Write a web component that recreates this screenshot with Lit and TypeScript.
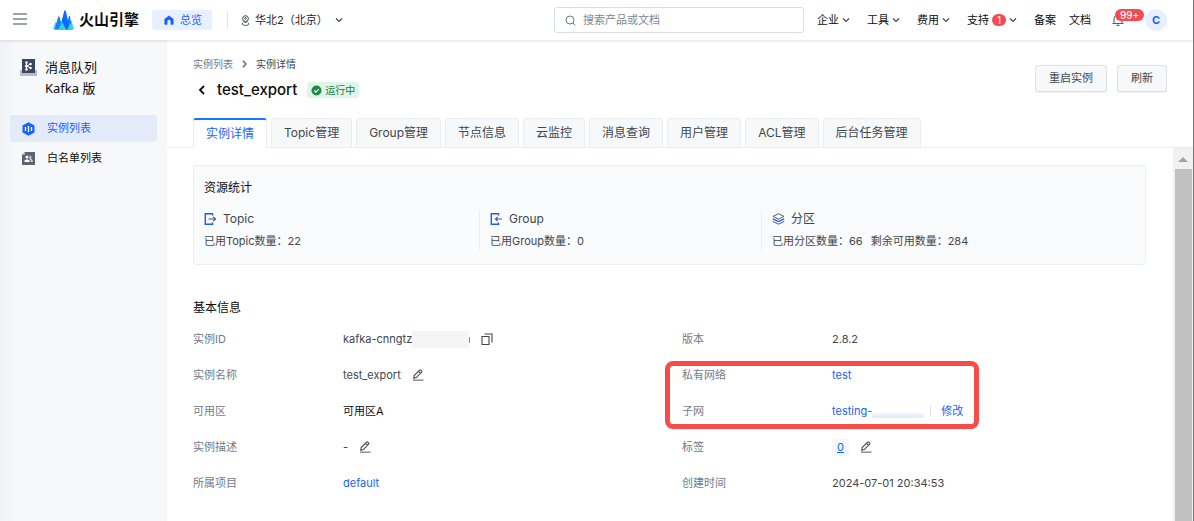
import { LitElement, html, css, svg } from "lit";
import { customElement } from "lit/decorators.js";
import { classMap } from "lit/directives/class-map.js";

const chevron = html`<svg class="chev" width="8" height="8" viewBox="0 0 8 8" aria-hidden="true">
  <path d="M1 2.5 4 5.5 7 2.5" fill="none" stroke="#41464f" stroke-width="1.2" />
</svg>`;

const pencil = html`<svg width="12" height="12" viewBox="0 0 12 12" fill="none" stroke="#41464f" aria-hidden="true">
  <path d="M1.8 9.2 2.2 6.6 7.6 1.2a.8.8 0 0 1 1.1 0l.9.9a.8.8 0 0 1 0 1.1L4.3 8.6 1.8 9.2ZM6.6 2.3l2 2" stroke-width="1.1" />
  <path d="M1 11.2h10.5" stroke="#85888e" stroke-width="1.4" />
</svg>`;

const copy = html`<svg width="12" height="12" viewBox="0 0 12 12" fill="none" stroke="#41464f" stroke-width="1.1" aria-hidden="true">
  <path d="M1 3.5h7v8H1zM3.5 1H11v8.5" />
</svg>`;

const arrowOut = svg`<path d="M4.5 6H11.5M9.3 3.8 11.5 6 9.3 8.2" stroke="#4e5969" />`;
const arrowIn = svg`<path d="M12 6H5.5M7.7 3.8 5.5 6l2.2 2.2" stroke="#4e5969" />`;
const gate = (arrow: unknown) => html`<svg width="13" height="12" viewBox="0 0 13 12" fill="none" stroke-width="1.2" aria-hidden="true">
  <path d="M8.5 2.5V.8H1.3v10.4H8.5V9.5" stroke="#1c5cf5" stroke-width="1.4" />${arrow}
</svg>`;

const layers = html`<svg width="13" height="12" viewBox="0 0 13 12" fill="none" aria-hidden="true">
  <path d="M6.5.7 12 3.4 6.5 6.2 1 3.4Z" stroke="#4e5969" />
  <path d="M.8 5.9 6.5 8.6l5.7-2.7" stroke="#1c5cf5" stroke-width="1.4" />
  <path d="M.8 8.4 6.5 11.2l5.7-2.8" stroke="#4e5969" />
</svg>`;

const MENUS = ["企业", "工具", "费用"];
const TABS = ["实例详情", "Topic管理", "Group管理", "节点信息", "云监控", "消息查询", "用户管理", "ACL管理", "后台任务管理"];
const STATS = [
  { icon: gate(arrowOut), name: "Topic", figures: ["已用Topic数量：22"] },
  { icon: gate(arrowIn), name: "Group", figures: ["已用Group数量：0"] },
  { icon: layers, name: "分区", figures: ["已用分区数量：66", "剩余可用数量：284"] },
];

@customElement("app-header")
class AppHeader extends LitElement {
  static styles = css`
    :host {
      display: flex;
      align-items: center;
      height: 40px;
      flex: none;
      padding: 0 26px 0 13px;
      background: #fff;
      box-shadow: 0 1px 3px rgba(0, 0, 0, 0.12);
      position: relative;
      z-index: 2;
      color: #0c0d0e;
    }
    button, select, input { font: inherit; color: inherit; border: 0; background: none; padding: 0; margin: 0; }
    button { display: flex; align-items: center; cursor: pointer; white-space: nowrap; }
    .burger { width: 14px; margin-right: 26px; }
    .logo { display: flex; align-items: center; gap: 5px; color: #0c0d0e; text-decoration: none; font-size: 15px; line-height: 20px; font-weight: 700; white-space: nowrap; }
    .overview { display: flex; align-items: center; gap: 6px; height: 20px; margin-left: 13px; padding: 0 10px 0 12px; border-radius: 3px; background: #e8f0ff; color: #1664ff; text-decoration: none; white-space: nowrap; }
    .region { display: flex; align-items: center; margin-left: 15px; padding-left: 13px; border-left: 1px solid #e3e6eb; color: #1d2129; }
    .region select { appearance: none; margin: 0 7px 0 5px; }
    .search { display: flex; align-items: center; gap: 7px; box-sizing: border-box; flex: 0 1 250px; height: 26px; margin-left: auto; padding: 0 10px; border: 1px solid #d9dee7; border-radius: 3px; }
    .search input { flex: 1; min-width: 0; outline: none; }
    .search input::placeholder { color: #80858e; opacity: 1; }
    nav { display: flex; align-items: center; gap: 17px; margin-left: 13px; }
    .menu { gap: 3px; }
    .pill { padding: 0 5px; border-radius: 6px; background: #f54a52; color: #fff; font-size: 10px; line-height: 12px; }
    .plain { display: flex; gap: 13px; }
    .plain a { color: inherit; text-decoration: none; white-space: nowrap; }
    .bell { position: relative; margin: 0 4px; }
    .bell .pill { position: absolute; left: 3px; top: -5px; font-weight: 500; }
    .avatar { justify-content: center; width: 22px; height: 22px; border-radius: 50%; background: #e8f0ff; color: #1664ff; font-weight: 700; }
  `;
  render() {
    return html`
      <button class="burger" aria-label="菜单">
        <svg width="14" height="14" viewBox="0 0 14 14" stroke="#41464f" stroke-width="1.2"><path d="M0 1h14M0 6h14M0 11h14" /></svg>
      </button>
      <a class="logo" href="#">
        <svg width="21" height="20" viewBox="0 0 21 20" aria-hidden="true">
          <path d="M0 19.5 2.2 12.5 4.5 12 4 19.5Z M15 19.500 17.500 10.500h1L21 19.500Z" fill="#2fd5dc" />
          <path d="M1.800 19.500 5.200 6.500h1.200L10 19.500Z M12 19.500 16 6h1l2 13.500Z" fill="#1a7bff" />
          <path d="M6.500 19.500 11.300.500h1.400L17 19.500Z" fill="#0a6cff" />
          <path d="M5.500 19.500 8.500 12.500h1L13 19.500Z M14.500 19.500l2.500-6h1l2.500 6Z" fill="#2fd5dc" />
        </svg>
        火山引擎
      </a>
      <a class="overview" href="#">
        <svg width="10" height="10" viewBox="0 0 10 10" aria-hidden="true"><path d="M5 .4 9.6 4v4.8a.9.9 0 0 1-.9.9H6.6V6.4a1.6 1.6 0 0 0-3.2 0v3.3H1.3a.9.9 0 0 1-.9-.9V4Z" fill="#1664ff" /></svg>
        总览
      </a>
      <label class="region">
        <svg width="9" height="11" viewBox="0 0 9 11" fill="none" stroke="#41464f" aria-hidden="true">
          <circle cx="4.5" cy="3.6" r="2.9" /><circle cx="4.5" cy="3.4" r=".8" /><path d="M2.4 5.8 4.5 8l2.1-2.2M2.2 7.6C-.2 9 2 10.4 4.5 10.4S9.2 9 6.8 7.6" />
        </svg>
        <select aria-label="地域"><option>华北2（北京）</option></select>
        ${chevron}
      </label>
      <label class="search">
        <svg width="11" height="11" viewBox="0 0 11 11" fill="none" stroke="#73777e" aria-hidden="true"><circle cx="5" cy="5" r="4" /><path d="m8 8 2.3 2.3" /></svg>
        <input type="search" placeholder="搜索产品或文档" aria-label="搜索产品或文档" />
      </label>
      <nav>
        ${MENUS.map((m) => html`<button class="menu">${m}${chevron}</button>`)}
        <button class="menu">支持<span class="pill">1</span>${chevron}</button>
        <div class="plain"><a href="#">备案</a><a href="#">文档</a></div>
        <button class="bell" aria-label="消息">
          <svg width="12" height="12" viewBox="0 0 12 12" fill="none" stroke="#5a5f68" stroke-width="1.1"><path d="M.5 9.5h11M2 9.5V5a4 4 0 0 1 8 0v4.5M4.5 11.4h3" /></svg>
          <span class="pill">99+</span>
        </button>
        <button class="avatar">C</button>
      </nav>
    `;
  }
}

@customElement("app-sidebar")
class AppSidebar extends LitElement {
  static styles = css`
    :host { display: block; box-sizing: border-box; flex: 0 0 167px; padding: 17px 10px; background: linear-gradient(90deg, #f0f3f7, #f6f8fa 14px); color: #0c0d0e; }
    .product { display: flex; gap: 8px; margin: 0 0 16px; padding-left: 10px; font: 400 13px/21px "Noto Sans", "Noto Sans CJK SC", sans-serif; }
    .product svg { margin-top: 2px; flex: none; }
    .product span { max-width: 60px; }
    .item { display: flex; align-items: center; gap: 12px; height: 27px; margin-bottom: 3px; padding-left: 12px; border-radius: 3px; color: inherit; text-decoration: none; }
    .item span { padding-bottom: 2px; }
    .item.on { background: #e3ebfa; color: #1664ff; }
  `;
  render() {
    return html`
      <h2 class="product">
        <svg width="17" height="17" viewBox="0 0 17 17" aria-hidden="true">
          <path d="M0 11h17v6H0z" fill="#b6bccb" /><path d="M2 0h13v14H2z" fill="#3d4660" />
          <path d="M6.5 4v6M7 7l3.5-2M7 7l3.5 2" stroke="#fff" /><g fill="#fff"><circle cx="6.5" cy="3.5" r="1.3" /><circle cx="6.5" cy="7" r="1.6" /><circle cx="6.5" cy="10.5" r="1.3" /><circle cx="10.5" cy="5" r="1.3" /><circle cx="10.5" cy="9" r="1.3" /></g>
        </svg>
        <span>消息队列 Kafka 版</span>
      </h2>
      <a class="item on" href="#" aria-current="page">
        <svg width="13" height="14" viewBox="0 0 13 14" aria-hidden="true"><path d="M6.5.3 12.5 3.6v6.8l-6 3.3-6-3.3V3.6Z" fill="#1664ff" /><path d="M3.5 5v4M6.5 4v6M9.5 5v4" stroke="#fff" stroke-width="1.3" /></svg>
        <span>实例列表</span>
      </a>
      <a class="item" href="#">
        <svg width="13" height="13" viewBox="0 0 13 13" aria-hidden="true"><path d="M3 0h10v13H0V3Z" fill="#5c6474" /><path d="M0 3 3 0v3Z" fill="#aeb4bf" /><circle cx="5" cy="5" r="1.5" fill="#fff" /><path d="M2.5 10V8.5l1.5-1h2l1.5 1V10Z" fill="#fff" /><path d="M7.5 3.7h1.8v3l1.5 1.5V10H8.5V8L7.3 7Z" fill="#c9cdd5" /></svg>
        <span>白名单列表</span>
      </a>
    `;
  }
}

@customElement("app-root")
class AppRoot extends LitElement {
  static styles = css`
    :host {
      display: flex;
      flex-direction: column;
      min-height: 100vh;
      box-sizing: border-box;
      border-right: 1px solid #76787c;
      background: #fff;
      color: #41464f;
      font: 400 11px/18px Inter, "Noto Sans CJK SC", sans-serif;
    }
    a { color: #1664ff; text-decoration: none; }
    button { font: inherit; color: inherit; cursor: pointer; margin: 0; }
    h1, h2, dl, dd, p { margin: 0; }
    .body { display: flex; flex: 1; }
    main { flex: 1; min-width: 0; display: flex; flex-direction: column; }
    .top { display: flex; justify-content: space-between; padding: 15px 26px 0; }
    .crumbs { display: flex; align-items: center; gap: 9px; font-size: 10px; }
    .crumbs a { color: #737a87; }
    .heading { display: flex; align-items: center; gap: 10px; margin-top: 6px; padding-left: 4px; }
    .back { display: flex; padding: 0; border: 0; background: none; }
    h1 { font-size: 15px; line-height: 22px; font-weight: 500; color: #0c0d0e; }
    .status { display: flex; align-items: center; gap: 3px; padding: 0 4px; border-radius: 3px; background: #dff5e5; color: #1c7a3f; font-size: 10px; line-height: 16px; }
    .actions { display: flex; gap: 10px; padding-top: 10px; }
    .actions button { height: 27px; padding: 0 13px 2px; border: 1px solid #dde2e9; border-radius: 3px; background: #f6f8fa; box-shadow: 0 1px 1px rgba(0, 0, 0, 0.06); }
    .tabs { display: flex; gap: 4px; margin-top: 17px; padding: 0 26px; border-bottom: 1px solid #eaedf1; }
    .tab { height: 30px; margin-bottom: -1px; padding: 0 12px; border: 1px solid #eaedf1; border-radius: 3px 3px 0 0; background: #f6f8fa; font-size: 12px; white-space: nowrap; }
    .tab.on { border-top: 2px solid #1677ff; border-bottom-color: #fff; background: #fff; color: #1664ff; }
    .scroller { display: flex; flex: 1; }
    .content { flex: 1; min-width: 0; padding: 17px 27px 20px 26px; }
    .bar { display: flex; flex-direction: column; align-items: center; flex: 0 0 20px; background: #f1f1f1; }
    .bar svg { margin: 9px 0 7px; }
    .thumb { flex: 1; width: 17px; background: #c1c1c1; }
    h2 { font-size: 12px; line-height: 18px; font-weight: 400; color: #0c0d0e; }
    .card { padding: 13px 10px; border: 1px solid #eceef2; border-radius: 3px; background: #fafbfd; }
    .stats { display: grid; grid-template-columns: 275fr 282fr 374fr; margin-top: 14px; }
    .stat + .stat { padding-left: 10px; border-left: 1px solid #eaedf1; }
    .stat .name { display: flex; align-items: center; gap: 6px; font-size: 12px; line-height: 16px; }
    .figures { display: flex; gap: 8px; margin-top: 4px; line-height: 20px; }
    .basic { margin-top: 34px; }
    .info { display: grid; grid-template-columns: 1fr 1fr; gap: 25px; margin-top: 4px; }
    .col { position: relative; }
    .row { display: flex; align-items: center; height: 36px; }
    dt { width: 150px; flex: none; color: #737a87; }
    dd { display: flex; align-items: center; white-space: nowrap; }
    .icon { display: flex; margin-left: 11px; padding: 0; border: 0; background: none; }
    .mask { width: 57px; height: 17px; background: #f5f5f5; }
    .mask.line { width: 52px; height: 5px; margin-top: 8px; background: linear-gradient(#f4f7ff, #dfe8fd); }
    .sliver { width: 1px; height: 6px; margin-top: 2px; background: #8a8d93; }
    .sep { width: 1px; height: 10px; margin: 0 10px 0 6px; background: #dde2e9; }
    .count { padding: 0 5px; border-radius: 2px; background: #f3f6fc; text-decoration: underline; line-height: 17px; }
    .dark { color: #0c0d0e; }
    .callout { position: absolute; left: -17px; top: 40px; width: 304px; height: 58px; border: 5px solid #f74c48; border-radius: 8px; pointer-events: none; }
  `;

  private row(label: string, value: unknown) {
    return html`<div class="row"><dt>${label}</dt><dd>${value}</dd></div>`;
  }

  private tool(label: string, icon: unknown) {
    return html`<button class="icon" aria-label=${label}>${icon}</button>`;
  }

  render() {
    return html`
      <app-header></app-header>
      <div class="body">
        <app-sidebar></app-sidebar>
        <main>
          <div class="top">
            <div>
              <div class="crumbs">
                <a href="#">实例列表</a>
                <svg width="5" height="8" viewBox="0 0 5 8" fill="none" stroke="#565c66" stroke-width="1.3"><path d="M.8.8 4 4 .8 7.2" /></svg>
                <span>实例详情</span>
              </div>
              <div class="heading">
                <button class="back" aria-label="返回"><svg width="10" height="10" viewBox="0 0 10 10" fill="none" stroke="#0c0d0e" stroke-width="1.8"><path d="M7 1 3 5l4 4" /></svg></button>
                <h1>test_export</h1>
                <span class="status">
                  <svg width="11" height="11" viewBox="0 0 11 11"><circle cx="5.5" cy="5.5" r="5" fill="#1f8a48" /><path d="m3.3 5.5 1.6 1.6 2.9-2.9" fill="none" stroke="#fff" stroke-width="1.2" /></svg>
                  运行中
                </span>
              </div>
            </div>
            <div class="actions"><button>重启实例</button><button>刷新</button></div>
          </div>
          <div class="tabs" role="tablist">
            ${TABS.map((t, i) => html`<button role="tab" aria-selected=${i === 0} class=${classMap({ tab: true, on: i === 0 })}>${t}</button>`)}
          </div>
          <div class="scroller">
            <div class="content">
              <section class="card">
                <h2>资源统计</h2>
                <div class="stats">
                  ${STATS.map((s) => html`<div class="stat">
                    <div class="name">${s.icon}${s.name}</div>
                    <div class="figures">${s.figures.map((f) => html`<span>${f}</span>`)}</div>
                  </div>`)}
                </div>
              </section>
              <section class="basic">
                <h2>基本信息</h2>
                <div class="info">
                  <dl class="col">
                    ${this.row("实例ID", html`kafka-cnngtz<span class="mask"></span><span class="sliver"></span>${this.tool("复制", copy)}`)}
                    ${this.row("实例名称", html`test_export${this.tool("编辑名称", pencil)}`)}
                    ${this.row("可用区", html`<span class="dark">可用区A</span>`)}
                    ${this.row("实例描述", html`-${this.tool("编辑描述", pencil)}`)}
                    ${this.row("所属项目", html`<a href="#">default</a>`)}
                  </dl>
                  <div class="col">
                    <dl>
                      ${this.row("版本", "2.8.2")}
                      ${this.row("私有网络", html`<a href="#">test</a>`)}
                      ${this.row("子网", html`<a href="#">testing-</a><span class="mask line"></span><span class="sep"></span><a href="#">修改</a>`)}
                      ${this.row("标签", html`<a class="count" href="#">0</a>${this.tool("编辑标签", pencil)}`)}
                      ${this.row("创建时间", "2024-07-01 20:34:53")}
                    </dl>
                    <div class="callout"></div>
                  </div>
                </div>
              </section>
            </div>
            <div class="bar" aria-hidden="true">
              <svg width="10" height="5" viewBox="0 0 10 5"><path d="M0 5 5 0l5 5Z" fill="#a3a3a3" /></svg>
              <div class="thumb"></div>
            </div>
          </div>
        </main>
      </div>
    `;
  }
}
